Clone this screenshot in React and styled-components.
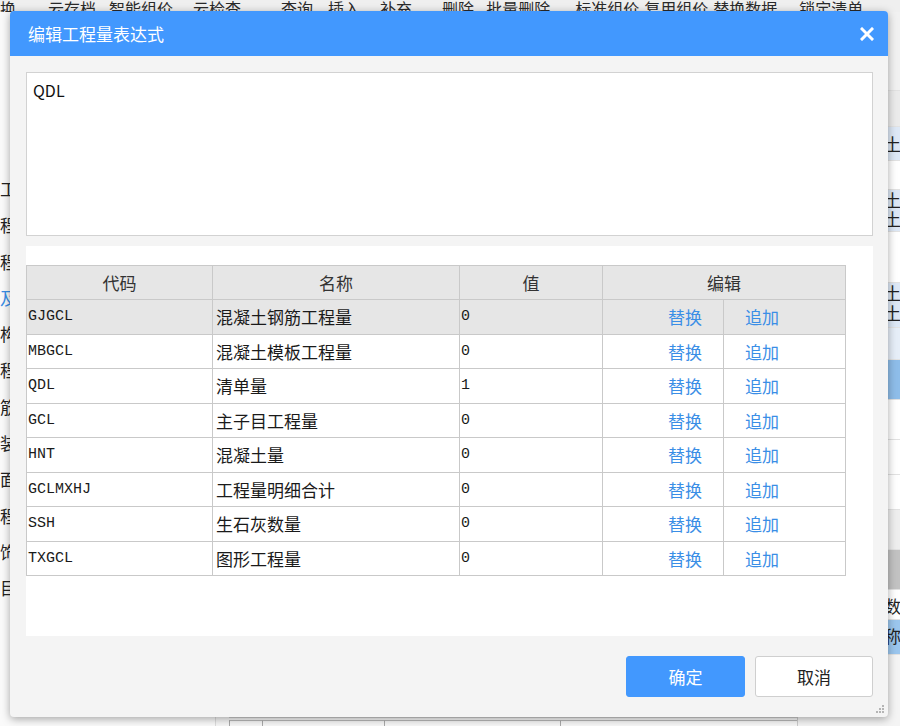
import React from 'react';
import styled, { createGlobalStyle } from 'styled-components';

const GlobalStyle = createGlobalStyle`
  html, body {
    margin: 0;
    padding: 0;
    background: #f0f0f0;
  }
  body {
    font-family: "Noto Sans CJK SC", "Noto Sans", sans-serif;
  }
`;

const CJK = `"Noto Sans CJK SC", "Noto Sans", sans-serif`;
const MONO = `"Liberation Mono", "DejaVu Sans Mono", monospace`;
const BLUE = '#4298fe';

/* ---------- background application (mostly covered by the dialog) ---------- */

const Screen = styled.div`
  position: relative;
  width: 900px;
  height: 726px;
  overflow: hidden;
  background: #f3f3f3;
  display: flex;
  flex-direction: column;
`;

const Toolbar = styled.div`
  height: 12px;
  display: flex;
  align-items: flex-end;
  background: #efefef;
  overflow: hidden;
  flex-shrink: 0;
`;

const ToolItem = styled.span`
  margin-left: ${p => p.$ml}px;
  font-family: ${CJK};
  font-size: 16px;
  line-height: 20px;
  margin-bottom: -6px;
  color: #2a2a2a;
  white-space: nowrap;
  flex-shrink: 0;
`;

const Workspace = styled.div`
  flex: 1;
  display: flex;
  min-height: 0;
`;

const LeftNav = styled.div`
  width: 216px;
  flex-shrink: 0;
  background: #fafafa;
  border-right: 1px solid #ddd;
  box-sizing: border-box;
  padding-top: 162px;
  display: flex;
  flex-direction: column;
`;

const NavChar = styled.div`
  height: 36.3px;
  flex-shrink: 0;
  font-family: ${CJK};
  font-size: 17px;
  line-height: 30px;
  color: ${p => (p.$active ? '#3a8ee6' : '#222')};
`;

const Center = styled.div`
  flex: 1;
  min-width: 0;
  display: flex;
  flex-direction: column;
  justify-content: flex-end;
  background: #f7f7f7;
  overflow: hidden;
`;

const BottomGrid = styled.div`
  height: 8px;
  display: flex;
  margin-left: 13px;
  border-top: 1px solid #cfcfcf;
`;

const GridCell = styled.div`
  width: ${p => p.$w}px;
  flex-shrink: 0;
  border-left: 1px solid #a9a9a9;
  border-top: 1px solid #b9b9b9;
  margin-top: 2px;
`;

const RightPane = styled.div`
  width: 102px;
  flex-shrink: 0;
  display: flex;
  flex-direction: column;
  background: #fff;
  border-left: 1px solid #ccc;
  overflow: hidden;
`;

const PaneRow = styled.div`
  height: ${p => p.$h}px;
  flex-shrink: 0;
  box-sizing: border-box;
  background: ${p => p.$bg || '#fff'};
  border-bottom: 1px solid #e2e2e2;
  font-family: ${CJK};
  font-size: 17px;
  line-height: ${p => p.$lh || p.$h}px;
  color: #222;
  padding-left: 86px;
  white-space: pre;
  overflow: hidden;
`;

/* ---------- dialog ---------- */

const Dialog = styled.div`
  position: absolute;
  left: 10px;
  top: 11px;
  width: 878px;
  height: 706px;
  background: #f4f4f4;
  border-radius: 4px;
  box-shadow: 0 2px 8px rgba(0, 0, 0, 0.35);
  display: flex;
  flex-direction: column;
  overflow: hidden;
`;

const TitleBar = styled.div`
  height: 45px;
  flex-shrink: 0;
  background: ${BLUE};
  display: flex;
  align-items: center;
  justify-content: space-between;
  padding: 0 10px 0 18px;
  color: #fff;
  font-family: ${CJK};
  font-size: 17px;
`;

const CloseButton = styled.button`
  width: 22px;
  height: 22px;
  border: none;
  background: transparent;
  padding: 0;
  display: flex;
  align-items: center;
  justify-content: center;
  cursor: pointer;
`;

const Body = styled.div`
  flex: 1;
  padding: 16px 15px 0 16px;
  display: flex;
  flex-direction: column;
`;

const Expression = styled.div`
  height: 164px;
  box-sizing: border-box;
  background: #fff;
  border: 1px solid #d2d2d2;
  padding: 5px 6px;
  font-family: ${CJK};
  font-size: 16px;
  line-height: 24px;
  color: #111;
`;

const TablePanel = styled.div`
  margin-top: 10px;
  height: 390px;
  box-sizing: border-box;
  background: #fff;
  padding-top: 19px;
`;

const Table = styled.table`
  width: 820px;
  border-collapse: collapse;
  table-layout: fixed;
`;

const Th = styled.th`
  height: 33px;
  padding: 0;
  background: #e6e6e6;
  border: 1px solid #c9c9c9;
  font-family: ${CJK};
  font-size: 17px;
  font-weight: 400;
  color: #333;
  text-align: center;
`;

const Tr = styled.tr`
  background: ${p => (p.$selected ? '#e6e6e6' : '#fff')};
`;

const Td = styled.td`
  height: 33.5px;
  padding: 0 ${p => (p.$mono ? '1px' : '3px')};
  border: 1px solid #c9c9c9;
  font-family: ${p => (p.$mono ? MONO : CJK)};
  font-size: ${p => (p.$mono ? '15px' : '17px')};
  color: #1a1a1a;
  white-space: nowrap;
  overflow: hidden;
`;

const LinkCell = styled.td`
  height: 33.5px;
  border: 1px solid #c9c9c9;
  font-family: ${CJK};
  font-size: 17px;
  color: #3a8ee6;
  text-align: ${p => (p.$side === 'right' ? 'right' : 'left')};
  padding: ${p => (p.$side === 'right' ? '0 21px 0 0' : '0 0 0 21px')};
  cursor: pointer;
`;

const Footer = styled.div`
  height: 81px;
  flex-shrink: 0;
  box-sizing: border-box;
  display: flex;
  justify-content: flex-end;
  align-items: flex-start;
  gap: 10px;
  padding: 20px 15px 0 0;
  position: relative;
`;

const Button = styled.button`
  width: ${p => p.$w}px;
  height: 41px;
  border-radius: 3px;
  border: 1px solid ${p => (p.$primary ? BLUE : '#cfcfcf')};
  background: ${p => (p.$primary ? BLUE : '#fff')};
  color: ${p => (p.$primary ? '#fff' : '#222')};
  font-family: ${CJK};
  font-size: 17px;
  cursor: pointer;
`;

const Grip = styled.svg`
  position: absolute;
  right: 3px;
  bottom: 3px;
`;

const toolItems = [
  ['换', 0], ['云存档', 32], ['智能组价', 13], ['云检查', 20], ['查询', 40],
  ['插入', 15], ['补充', 20], ['删除', 30], ['批量删除', 12], ['标准组价', 25],
  ['复用组价', 5], ['替换数据', 5], ['锁定清单', 22],
];

const navChars = ['工', '程', '程', '及', '构', '程', '筋', '装', '面', '程', '饰', '目'];

const paneRows = [
  { h: 79, bg: '#f1f1f1' },
  { h: 36, bg: '#ebebeb' },
  { h: 34, bg: '#dde8f6', text: '土', lh: 33 },
  { h: 29, bg: '#fff' },
  { h: 42, bg: '#dde8f6', text: '土\n土', lh: 19 },
  { h: 51, bg: '#fff' },
  { h: 45, bg: '#dde8f6', text: '土\n土', lh: 20 },
  { h: 32, bg: '#e6eef8' },
  { h: 40, bg: '#8ebde9' },
  { h: 40, bg: '#fff' },
  { h: 35, bg: '#fff' },
  { h: 35, bg: '#fff' },
  { h: 40, bg: '#eeeeee' },
  { h: 40, bg: '#c2c2c2' },
  { h: 30, bg: '#fff', text: '数量', lh: 32 },
  { h: 35, bg: '#9bc6ee', text: '称', lh: 32 },
  { h: 80, bg: '#f4f4f4' },
];

const rows = [
  { code: 'GJGCL', name: '混凝土钢筋工程量', value: '0' },
  { code: 'MBGCL', name: '混凝土模板工程量', value: '0' },
  { code: 'QDL', name: '清单量', value: '1' },
  { code: 'GCL', name: '主子目工程量', value: '0' },
  { code: 'HNT', name: '混凝土量', value: '0' },
  { code: 'GCLMXHJ', name: '工程量明细合计', value: '0' },
  { code: 'SSH', name: '生石灰数量', value: '0' },
  { code: 'TXGCL', name: '图形工程量', value: '0' },
];

const CloseIcon = () => (
  <svg width="14" height="14" viewBox="0 0 14 14">
    <path d="M2 2L12 12M12 2L2 12" stroke="#fff" strokeWidth="3" strokeLinecap="square" />
  </svg>
);

const GripIcon = () => (
  <Grip width="12" height="12" viewBox="0 0 12 12">
    {[[9, 3], [6, 6], [9, 6], [3, 9], [6, 9], [9, 9]].map(([x, y]) => (
      <rect key={`${x}-${y}`} x={x} y={y} width="2" height="2" fill="#b5b5b5" />
    ))}
  </Grip>
);

const App = () => (
  <>
    <GlobalStyle />
    <Screen>
      <Toolbar>
        {toolItems.map(([label, ml]) => (
          <ToolItem key={label} $ml={ml}>{label}</ToolItem>
        ))}
      </Toolbar>
      <Workspace>
        <LeftNav>
          {navChars.map((c, i) => (
            <NavChar key={i} $active={c === '及'}>{c}</NavChar>
          ))}
        </LeftNav>
        <Center>
          <BottomGrid>
            {[32, 121, 175, 239, 100].map((w, i) => (
              <GridCell key={i} $w={w} />
            ))}
          </BottomGrid>
        </Center>
        <RightPane>
          {paneRows.map((r, i) => (
            <PaneRow key={i} $h={r.h} $bg={r.bg} $lh={r.lh}>{r.text}</PaneRow>
          ))}
        </RightPane>
      </Workspace>

      <Dialog>
        <TitleBar>
          <span>编辑工程量表达式</span>
          <CloseButton aria-label="关闭"><CloseIcon /></CloseButton>
        </TitleBar>
        <Body>
          <Expression>QDL</Expression>
          <TablePanel>
            <Table>
              <colgroup>
                <col style={{ width: 186 }} />
                <col style={{ width: 247 }} />
                <col style={{ width: 143 }} />
                <col style={{ width: 121 }} />
                <col style={{ width: 122 }} />
              </colgroup>
              <thead>
                <tr>
                  <Th>代码</Th>
                  <Th>名称</Th>
                  <Th>值</Th>
                  <Th colSpan={2}>编辑</Th>
                </tr>
              </thead>
              <tbody>
                {rows.map((r, i) => (
                  <Tr key={r.code} $selected={i === 0}>
                    <Td $mono>{r.code}</Td>
                    <Td>{r.name}</Td>
                    <Td $mono>{r.value}</Td>
                    <LinkCell $side="right">替换</LinkCell>
                    <LinkCell $side="left">追加</LinkCell>
                  </Tr>
                ))}
              </tbody>
            </Table>
          </TablePanel>
        </Body>
        <Footer>
          <Button $primary $w={119}>确定</Button>
          <Button $w={118}>取消</Button>
          <GripIcon />
        </Footer>
      </Dialog>
    </Screen>
  </>
);

export default App;
